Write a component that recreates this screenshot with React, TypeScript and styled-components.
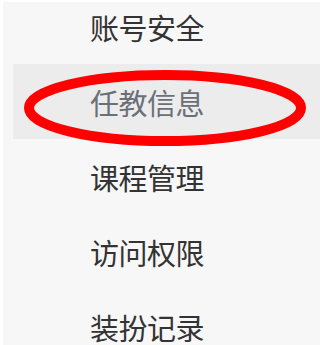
import styled, { createGlobalStyle } from "styled-components";

const GlobalStyle = createGlobalStyle`
   html, body {
      margin: 0;
      padding: 0;
      background: #ffffff;
   }
`;

const menuItems = ["账号安全", "任教信息", "课程管理", "访问权限", "装扮记录"];
const ACTIVE = 1;

const App = () => {
   return (
      <>
         <GlobalStyle />
         <Sidebar>
            <MenuList>
               {menuItems.map((label, i) => (
                  <MenuItem key={label} $active={i === ACTIVE}>
                     {label}
                     {/* 빨간 동그라미 표시 */}
                     {i === ACTIVE && (
                        <Circle viewBox="0 0 284 76" aria-hidden="true">
                           <ellipse
                              cx="142"
                              cy="38"
                              rx="136"
                              ry="33"
                              fill="none"
                              stroke="#ff0000"
                              strokeWidth="10"
                           />
                        </Circle>
                     )}
                  </MenuItem>
               ))}
            </MenuList>
         </Sidebar>
      </>
   );
};

export default App;

const Sidebar = styled.div`
   width: 317px;
   height: 343px;
   margin: 2px 0 0 3px;
   background: #f7f7f7;
   overflow: hidden;
`;

const MenuList = styled.ul`
   list-style: none;
   margin: -13px 0 0 0;
   padding: 0;
   display: flex;
   flex-direction: column;
`;

const MenuItem = styled.li<{ $active?: boolean }>`
   position: relative;
   height: 75px;
   margin-left: 10px;
   padding-left: 77px;
   display: flex;
   align-items: center;
   font-family: "Noto Sans CJK SC", "Noto Sans", sans-serif;
   font-size: 29px;
   letter-spacing: -0.5px;
   color: ${({ $active }) => ($active ? "#6b7078" : "#333333")};
   background: ${({ $active }) => ($active ? "#ececec" : "transparent")};
`;

const Circle = styled.svg`
   position: absolute;
   left: 10px;
   top: 6px;
   width: 284px;
   height: 76px;
   overflow: visible;
   pointer-events: none;
`;
